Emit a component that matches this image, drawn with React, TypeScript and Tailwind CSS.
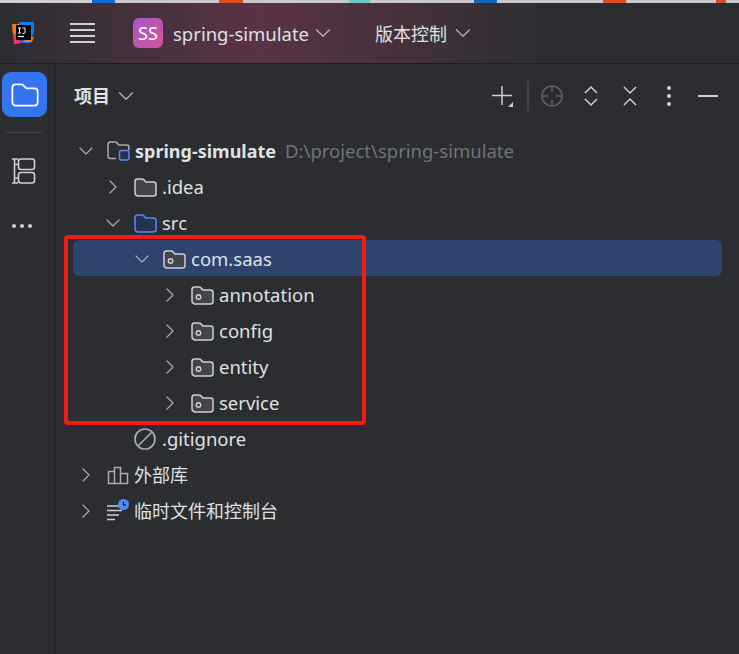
import { ChevronDown, ChevronRight } from "lucide-react";
import type { ReactNode } from "react";

const font = "font-['Noto_Sans','Noto_Sans_CJK_SC',sans-serif]";

function FolderShape({ stroke, fill }: { stroke: string; fill: string }) {
  return <path d="M2 6.500C2 5.100 3.100 4 4.500 4h4.600c.6 0 1.100.2 1.500.6l2 2c.3.3.6.4 1 .4h6.900c1.400 0 2.500 1.100 2.500 2.500v9c0 1.400-1.100 2.500-2.500 2.500h-16C3.100 20.500 2 19.400 2 18z" stroke={stroke} fill={fill} strokeWidth="1.500" />;
}

function Folder({ stroke = "#ced0d6", fill = "#43454a" }: { stroke?: string; fill?: string }) {
  return <svg width="24" height="24" viewBox="0 0 24 24" fill="none"><FolderShape stroke={stroke} fill={fill} /></svg>;
}

function PackageIcon() {
  return (
    <svg width="24" height="24" viewBox="0 0 24 24" fill="none">
      <FolderShape stroke="#ced0d6" fill="#43454a" />
      <circle cx="8.500" cy="14" r="2.200" stroke="#ced0d6" strokeWidth="1.400" />
    </svg>
  );
}

function RootFolder() {
  return (
    <svg width="26" height="24" viewBox="0 0 26 24" fill="none">
      <path d="M10 19.500H4.500C3.100 19.500 2 18.400 2 17V5.500C2 4.100 3.100 3 4.500 3h4.600c.6 0 1.100.2 1.500.6l2 2c.3.3.6.4 1 .4h6.900c1.400 0 2.500 1.100 2.500 2.500V11" stroke="#a8abb2" strokeWidth="1.500" />
      <rect x="13.500" y="11.500" width="9.500" height="9.500" rx="2" fill="#25324d" stroke="#548af7" strokeWidth="1.500" />
    </svg>
  );
}

function Ignored() {
  return (
    <svg width="24" height="24" viewBox="0 0 24 24" fill="none" stroke="#a8abb2" strokeWidth="1.700">
      <circle cx="12" cy="12" r="10" />
      <path d="M5.500 18.500 18.500 5.500" />
    </svg>
  );
}

function Library() {
  return (
    <svg width="24" height="24" viewBox="0 0 24 24" fill="none" stroke="#a8abb2" strokeWidth="1.500">
      <path d="M2.500 20.500v-12h6v12zM8.500 20.500V4.500h6v16zM14.500 20.500v-10h7v10zM2 20.500h20" />
    </svg>
  );
}

function Scratches() {
  return (
    <svg width="26" height="24" viewBox="0 0 26 24" fill="none">
      <path d="M1 7h12M1 11.500h15M1 16h12M1 20.500h8" stroke="#ced0d6" strokeWidth="1.500" />
      <circle cx="17.500" cy="5.500" r="5.500" fill="#548af7" />
      <path d="M17.500 2.500v3.300h2.500" stroke="#1e1f22" strokeWidth="1.200" />
    </svg>
  );
}

function Structure() {
  return (
    <svg width="26" height="28" viewBox="0 0 26 28" fill="none" stroke="#ced0d6" strokeWidth="1.600">
      <path d="M1 2h6M3.500 2v24M1 26h6M3.500 7.500h4M3.500 21h4" />
      <rect x="7.500" y="2" width="16" height="10.500" rx="2.500" />
      <rect x="7.500" y="15.500" width="16" height="10.500" rx="2.500" />
    </svg>
  );
}

function Logo() {
  return (
    <svg width="24" height="24" viewBox="0 0 24 24">
      <path d="M1 3h7v16l5 2-7 2H3z" fill="#fe315d" />
      <path d="M1 3h8v10H2z" fill="#f97a12" />
      <path d="M8 1h15v10l-4 11h-8z" fill="#087cfa" />
      <path d="M15 16h8l-2 5h-8z" fill="#f97a12" />
      <rect x="5" y="4" width="15" height="15" fill="#000" />
      <path d="M7 15.500h6" stroke="#fff" strokeWidth="1.200" />
      <path d="M7 7h3M8.500 7v5M7 12h3M11.500 7h2.500v4.500c0 .5-.5 1-1 1h-1.500" stroke="#fff" strokeWidth="1" fill="none" />
    </svg>
  );
}

function Chevron({ open }: { open: boolean }) {
  const Icon = open ? ChevronDown : ChevronRight;
  return <Icon size={24} strokeWidth={1.200} className="text-[#a8abb2] shrink-0" />;
}

type Row = {
  label: string;
  hint?: string;
  pad: string;
  open?: boolean;
  icon: ReactNode;
  bold?: boolean;
  selected?: boolean;
  cjk?: boolean;
};

const rows: Row[] = [
  { label: "spring-simulate", hint: "D:\\project\\spring-simulate", pad: "pl-[1px]", open: true, icon: <RootFolder />, bold: true },
  { label: ".idea", pad: "pl-[28px]", open: false, icon: <Folder /> },
  { label: "src", pad: "pl-[28px]", open: true, icon: <Folder stroke="#548af7" fill="#25324d" /> },
  { label: "com.saas", pad: "pl-[57px]", open: true, icon: <PackageIcon />, selected: true },
  { label: "annotation", pad: "pl-[85px]", open: false, icon: <PackageIcon /> },
  { label: "config", pad: "pl-[85px]", open: false, icon: <PackageIcon /> },
  { label: "entity", pad: "pl-[85px]", open: false, icon: <PackageIcon /> },
  { label: "service", pad: "pl-[85px]", open: false, icon: <PackageIcon /> },
  { label: ".gitignore", pad: "pl-[28px]", icon: <Ignored /> },
  { label: "外部库", pad: "pl-[1px]", open: false, icon: <Library />, cjk: true },
  { label: "临时文件和控制台", pad: "pl-[1px]", open: false, icon: <Scratches />, cjk: true },
];

const scraps = [
  { w: "w-[92px]", bg: "bg-[#cfcfcf]" },
  { w: "w-[23px]", bg: "bg-[#1467d8]" },
  { w: "w-[104px]", bg: "bg-[#c9c9c9]" },
  { w: "w-[24px]", bg: "bg-[#e04a24]" },
  { w: "w-[106px]", bg: "bg-[#c9c9c9]" },
  { w: "w-[21px]", bg: "bg-[#6fc9c4]" },
  { w: "w-[104px]", bg: "bg-[#c9c9c9]" },
  { w: "w-[23px]", bg: "bg-[#1467a8]" },
  { w: "w-[106px]", bg: "bg-[#c9c9c9]" },
  { w: "w-[23px]", bg: "bg-[#e04a24]" },
  { w: "w-[90px]", bg: "bg-[#c9c9c9]" },
  { w: "w-[10px]", bg: "bg-[#e04a24]" },
  { w: "w-[13px]", bg: "bg-[#c9c9c9]" },
];

export default function App() {
  return (
    <div className={`${font} relative flex h-[654px] w-[739px] flex-col overflow-hidden bg-[#2b2d30] text-[18.500px] text-[#dfe1e5]`}>
      <div className="flex h-[3px] shrink-0">
        {scraps.map((s, i) => (
          <div key={i} className={`${s.w} ${s.bg}`} />
        ))}
      </div>

      {/* Title bar */}
      <header className="flex h-[61px] shrink-0 items-center border-b border-[#1e1f22] bg-gradient-to-r from-[#2b2d30] via-[#5a3346] via-35% to-[#2b2d30] to-75%">
        <div className="ml-[11px]"><Logo /></div>
        <div className="ml-[35px] flex h-[24px] w-[25px] flex-col justify-between py-[2px]">
          <div className="h-[2px] bg-[#ced0d6]" />
          <div className="h-[2px] bg-[#ced0d6]" />
          <div className="h-[2px] bg-[#ced0d6]" />
          <div className="h-[2px] bg-[#ced0d6]" />
        </div>
        <div className="ml-[38px] flex h-[30px] w-[30px] items-center justify-center rounded-[6px] bg-gradient-to-br from-[#a855c7] to-[#d0549a] text-[18px] text-white">SS</div>
        <span className="ml-[10px] pt-[2px]">spring-simulate</span>
        <ChevronDown size={26} strokeWidth={1.100} className="ml-[1px] text-[#b4b8bf]" />
        <span className="ml-[39px] pt-[2px] text-[18px]">版本控制</span>
        <ChevronDown size={26} strokeWidth={1.100} className="ml-[3px] text-[#b4b8bf]" />
      </header>

      <div className="flex min-h-0 flex-1">
        {/* Left tool rail */}
        <aside className="flex w-[55px] shrink-0 flex-col border-r border-[#1e1f22] pt-[8px]">
          <div className="ml-[2px] flex h-[45px] w-[45px] items-center justify-center rounded-[9px] bg-[#3574f0]">
            <svg width="32" height="32" viewBox="0 0 24 24" fill="none"><path d="M2.500 6.500C2.500 5.100 3.600 4 5 4h4.100c.6 0 1.100.2 1.500.6l2 2c.3.3.6.4 1 .4H19c1.400 0 2.500 1.100 2.500 2.500v8c0 1.400-1.100 2.500-2.500 2.500H5c-1.400 0-2.500-1.100-2.500-2.500z" stroke="#fff" strokeWidth="1.300" /></svg>
          </div>
          <div className="ml-[6px] mt-[15px] h-px w-[36px] bg-[#43454a]" />
          <div className="ml-[11px] mt-[24px]"><Structure /></div>
          <div className="ml-[12px] mt-[39px] flex gap-[4px]">
            <div className="h-[4px] w-[4px] rounded-full bg-[#ced0d6]" />
            <div className="h-[4px] w-[4px] rounded-full bg-[#ced0d6]" />
            <div className="h-[4px] w-[4px] rounded-full bg-[#ced0d6]" />
          </div>
        </aside>

        {/* Project panel */}
        <main className="min-w-0 flex-1">
          <div className="flex h-[68px] items-start pt-[20px]">
            <div className="ml-[19px] flex h-[24px] items-center">
              <span className="text-[18px] font-semibold">项目</span>
              <ChevronDown size={26} strokeWidth={1.100} className="ml-[3px] text-[#b4b8bf]" />
            </div>
            <div className="ml-auto mr-[21px] flex h-[24px] items-center text-[#ced0d6]">
              <svg width="24" height="24" viewBox="0 0 24 24" fill="none">
                <path d="M11 2v19M1 11.500h20" stroke="#ced0d6" strokeWidth="1.500" />
                <path d="M22 18v5h-5z" fill="#ced0d6" />
              </svg>
              <div className="ml-[12px] h-[30px] w-[2px] bg-[#43454a]" />
              <svg className="ml-[11px]" width="24" height="24" viewBox="0 0 24 24" fill="none" stroke="#5f6167" strokeWidth="1.500">
                <circle cx="12" cy="12" r="10" />
                <path d="M12 2v6M12 16v6M2 12h6M16 12h6" />
              </svg>
              <svg className="ml-[18px]" width="18" height="24" viewBox="0 0 18 24" fill="none" stroke="#ced0d6" strokeWidth="1.500">
                <path d="M3 9l6-6 6 6M3 15l6 6 6-6" />
              </svg>
              <svg className="ml-[21px]" width="18" height="24" viewBox="0 0 18 24" fill="none" stroke="#ced0d6" strokeWidth="1.500">
                <path d="M3 3l6 6 6-6M3 21l6-6 6 6" />
              </svg>
              <div className="ml-[28px] flex flex-col gap-[4px]">
                <div className="h-[4px] w-[4px] rounded-full bg-[#ced0d6]" />
                <div className="h-[4px] w-[4px] rounded-full bg-[#ced0d6]" />
                <div className="h-[4px] w-[4px] rounded-full bg-[#ced0d6]" />
              </div>
              <div className="ml-[27px] h-[2px] w-[20px] bg-[#ced0d6]" />
            </div>
          </div>

          <ul className="ml-[18px] w-[649px]">
            {rows.map((r) => (
              <li key={r.label} className={`flex h-[36px] items-center rounded-[6px] pt-[2px] ${r.pad} ${r.selected ? "bg-[#2e436e]" : ""}`}>
                <div className="w-[24px] shrink-0">{r.open !== undefined && <Chevron open={r.open} />}</div>
                <div className="ml-[8px] flex w-[26px] shrink-0 items-center">{r.icon}</div>
                <span className={`whitespace-nowrap ${r.cjk ? "ml-[2px] text-[18px]" : "ml-[3px]"} ${r.bold ? "text-[18px] font-bold" : ""}`}>{r.label}</span>
                {r.hint && <span className="ml-[9px] whitespace-nowrap text-[#6f737a]">{r.hint}</span>}
              </li>
            ))}
          </ul>
        </main>
      </div>

      {/* Red annotation drawn over the screenshot */}
      <div className="absolute left-[64px] top-[235px] h-[190px] w-[302px] rounded-[4px] border-[4px] border-[#f01d14]" />
    </div>
  );
}
